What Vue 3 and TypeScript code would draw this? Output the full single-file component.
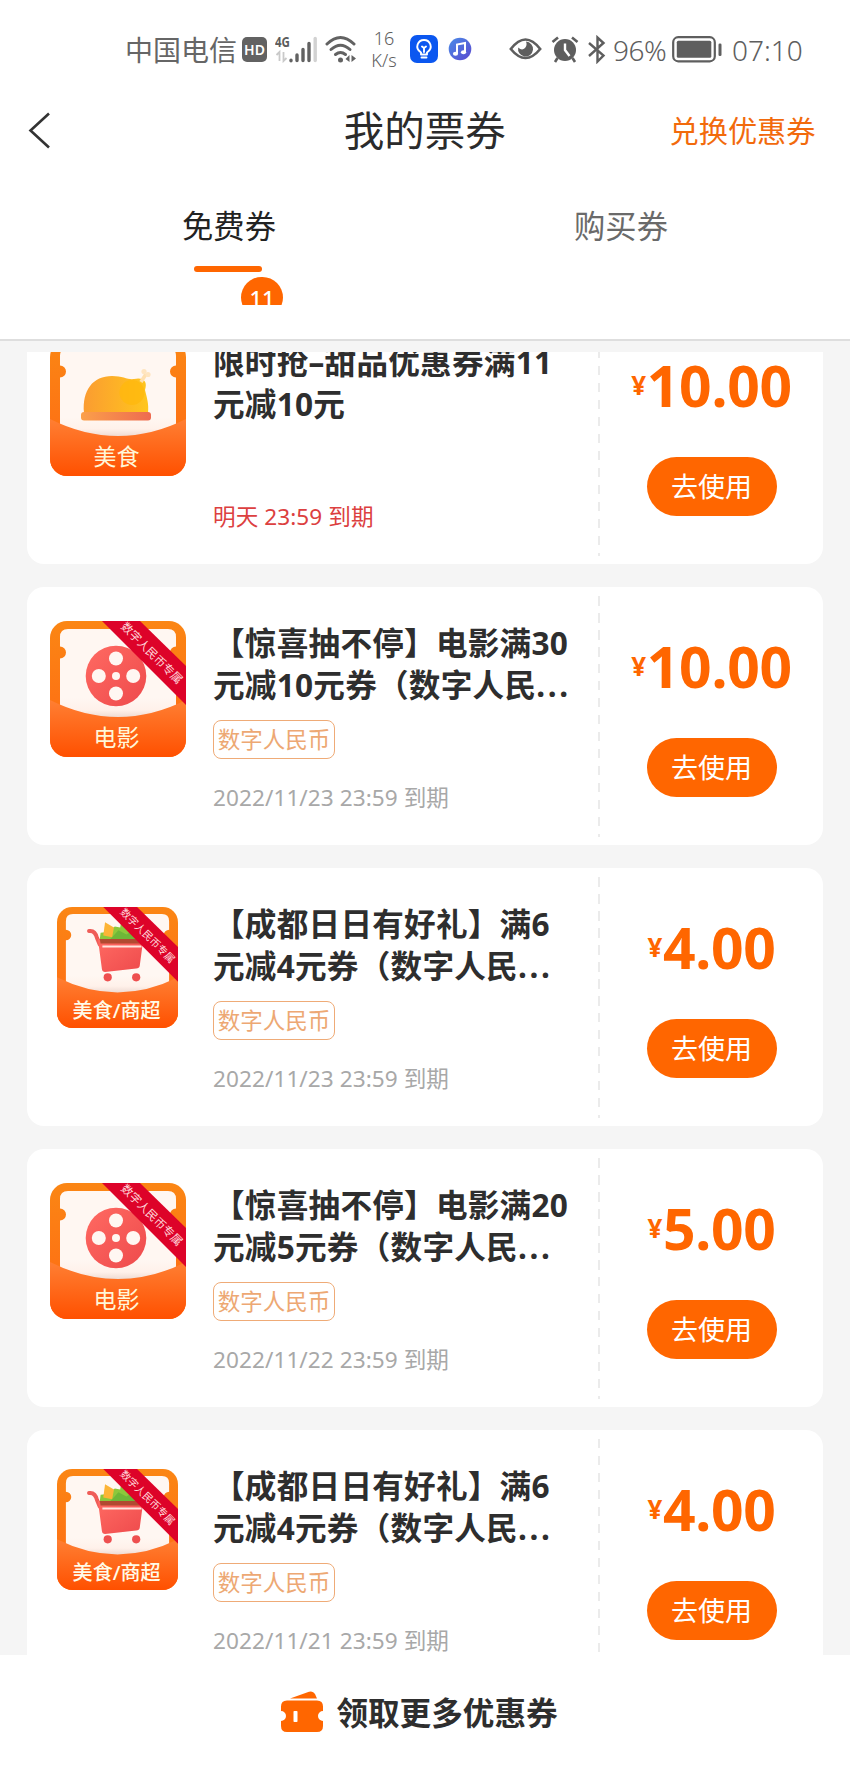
<script setup lang="ts">
type Kind = 'food' | 'movie' | 'market'

interface Coupon {
  kind: Kind
  label: string
  lines: string[]
  cut: boolean
  tag?: string
  expiry: string
  urgent?: boolean
  amount: string
}

const coupons: Coupon[] = [
  { kind: 'food', label: '美食', lines: ['限时抢–甜品优惠券满11', '元减10元'], cut: false, expiry: '明天 23:59 到期', urgent: true, amount: '10.00' },
  { kind: 'movie', label: '电影', lines: ['【惊喜抽不停】电影满30', '元减10元券（数字人民'], cut: true, tag: '数字人民币', expiry: '2022/11/23 23:59 到期', amount: '10.00' },
  { kind: 'market', label: '美食/商超', lines: ['【成都日日有好礼】满6', '元减4元券（数字人民'], cut: true, tag: '数字人民币', expiry: '2022/11/23 23:59 到期', amount: '4.00' },
  { kind: 'movie', label: '电影', lines: ['【惊喜抽不停】电影满20', '元减5元券（数字人民'], cut: true, tag: '数字人民币', expiry: '2022/11/22 23:59 到期', amount: '5.00' },
  { kind: 'market', label: '美食/商超', lines: ['【成都日日有好礼】满6', '元减4元券（数字人民'], cut: true, tag: '数字人民币', expiry: '2022/11/21 23:59 到期', amount: '4.00' },
]
</script>

<template>
  <div class="phone">
    <svg class="defs" width="0" height="0" aria-hidden="true">
      <defs>
        <linearGradient id="frame" x1="0" y1="0" x2="0" y2="1">
          <stop offset="0" stop-color="#fb8614" /><stop offset="0.6" stop-color="#fd7414" />
        </linearGradient>
        <linearGradient id="pocket" x1="0" y1="0" x2="0" y2="1">
          <stop offset="0" stop-color="#ff7f33" /><stop offset="1" stop-color="#ff5000" />
        </linearGradient>
        <linearGradient id="panel" x1="0" y1="0" x2="0" y2="1">
          <stop offset="0.75" stop-color="#fff7f2" /><stop offset="0.88" stop-color="#fff1ea" /><stop offset="1" stop-color="#e6cfc6" />
        </linearGradient>
        <linearGradient id="red" x1="0" y1="0" x2="1" y2="1">
          <stop offset="0" stop-color="#ff6a62" /><stop offset="1" stop-color="#ee4a4c" />
        </linearGradient>
        <linearGradient id="roast" x1="0" y1="0" x2="1" y2="0">
          <stop offset="0" stop-color="#fb9c31" /><stop offset="1" stop-color="#ffc61d" />
        </linearGradient>
        <linearGradient id="plate" x1="0" y1="0" x2="1" y2="0">
          <stop offset="0" stop-color="#fba04a" /><stop offset="1" stop-color="#ee6b50" />
        </linearGradient>
        <linearGradient id="note" x1="0" y1="0" x2="1" y2="1">
          <stop offset="0" stop-color="#4b8ce8" /><stop offset="1" stop-color="#5a48cf" />
        </linearGradient>
        <clipPath id="tile"><rect width="136" height="136" rx="17" /></clipPath>
      </defs>
    </svg>

    <header class="top">
      <div class="status">
        <span class="carrier">中国电信</span>
        <span class="hd">HD</span>
        <svg class="signal" width="44" height="28" viewBox="0 0 44 28">
          <text x="0" y="12" font-size="14" font-weight="700" textLength="15" lengthAdjust="spacingAndGlyphs" fill="#5c5c5c">4G</text>
          <path d="M4.500 26V17L1.500 20M8.500 17V26L11.500 23" stroke="#c9c9c9" stroke-width="1.800" fill="none" />
          <g stroke-width="3.400" stroke-linecap="round" stroke="#626262">
            <path d="M16 25.300V25.700M22 20V25.500M28 14.500V25.500M34 8.500V25.500" />
            <path d="M40.200 3.500V25.500" stroke="#d2d2d2" />
          </g>
        </svg>
        <svg class="wifi" width="32" height="28" viewBox="0 0 32 28">
          <g fill="none" stroke="#626262" stroke-width="3" stroke-linecap="round">
            <path d="M2 9Q15.500 -4 29 9" /><path d="M6 14.500Q15.500 6 25 14.500" /><path d="M10.500 19.500Q15.500 15.500 20.500 19.500" />
          </g>
          <circle cx="15.500" cy="25" r="2.500" fill="#626262" />
          <path d="M24.500 20V27L20.500 24ZM26.500 20V27L31 23.500Z" fill="#626262" />
        </svg>
        <span class="speed"><span>16</span><span>K/s</span></span>
        <svg class="bulb" width="28" height="28" viewBox="0 0 28 28">
          <rect width="28" height="28" rx="7" fill="#0b57f0" />
          <g fill="none" stroke="#fff" stroke-width="1.900" stroke-linecap="round" stroke-linejoin="round">
            <path d="M11 19.500V17.500C4 13 8 5 14 5S24 13 17 17.500V19.500ZM11.500 22.500H16.500M14 17V13L12 11.500M14 13L16 11.500" />
          </g>
        </svg>
        <svg class="music" width="24" height="24" viewBox="0 0 24 24">
          <circle cx="12" cy="12" r="11.300" fill="url(#note)" />
          <path d="M9 16.500V7.500L17 6V15" fill="none" stroke="#fff" stroke-width="2" />
          <ellipse cx="7.500" cy="16.800" rx="2.600" ry="2" fill="#fff" /><ellipse cx="15.500" cy="15.300" rx="2.600" ry="2" fill="#fff" />
        </svg>
        <svg class="eye" width="33" height="24" viewBox="0 0 33 24">
          <path d="M1.800 12Q16.500 -7 31.200 12Q16.500 30 1.800 12Z" fill="none" stroke="#5e5e5e" stroke-width="2.600" />
          <path d="M17 4.500A7.500 7.500 0 1 1 9.200 10.500Q13 14 16 11Q18.500 8 17 4.500Z" fill="#5e5e5e" />
        </svg>
        <svg class="alarm" width="28" height="27" viewBox="0 0 28 27">
          <circle cx="14" cy="14" r="11" fill="#5e5e5e" />
          <path d="M1.500 6L7 1.500M26.500 6L21 1.500M6.500 22L4 26M21.500 22L24 26" stroke="#5e5e5e" stroke-width="2.600" />
          <path d="M14 7.500V14L18.500 20" stroke="#fff" stroke-width="2.400" fill="none" />
        </svg>
        <svg class="bt" width="18" height="29" viewBox="0 0 18 29">
          <path d="M1 8L15.500 20.500L9.500 26.500V2.500L15.500 8L1 21" fill="none" stroke="#5e5e5e" stroke-width="2.400" />
        </svg>
        <span class="percent">96%</span>
        <svg class="battery" width="51" height="27" viewBox="0 0 51 27">
          <rect x="1.200" y="1.200" width="41.600" height="24.100" rx="5" fill="none" stroke="#5e5e5e" stroke-width="2.200" />
          <rect x="4.800" y="4.800" width="34.500" height="17" rx="1.500" fill="#5e5e5e" />
          <rect x="46.500" y="7.500" width="3" height="12.500" rx="1.300" fill="#5e5e5e" />
        </svg>
        <span class="clock">07:10</span>
      </div>

      <nav class="nav">
        <svg class="back" width="24" height="38" viewBox="0 0 24 38"><path d="M21 1.500L2.500 18.500L21 35.500" fill="none" stroke="#333" stroke-width="2.600" /></svg>
        <h1>我的票券</h1>
        <a class="redeem">兑换优惠券</a>
      </nav>

      <div class="tabs">
        <div class="tab active">
          <span class="name">免费券</span>
          <i class="bar"></i>
          <span class="badge-clip"><b class="badge">11</b></span>
        </div>
        <div class="tab"><span class="name">购买券</span></div>
      </div>
    </header>

    <main class="list">
      <article v-for="(c, i) in coupons" :key="i" class="card">
        <div class="thumb" :class="c.kind">
          <svg viewBox="0 0 136 136">
            <g clip-path="url(#tile)">
              <rect width="136" height="136" fill="url(#frame)" />
              <path d="M18 8H118Q126 8 126 16V25.500A6 6 0 0 0 126 37.500V100H10V37.500A6 6 0 0 0 10 25.500V16Q10 8 18 8Z" fill="url(#panel)" />
              <g v-if="c.kind === 'food'">
                <path d="M34 73C32 50 43 36 62 36C73 36 78 40 84 39C93 37 98 41 95 50C97 58 99 64 98 73Z" fill="url(#roast)" />
                <circle cx="82" cy="52.500" r="12.500" fill="#ffb80c" opacity="0.750" />
                <path d="M91 42L96 34" stroke="#ffe0b0" stroke-width="3.500" />
                <circle cx="94" cy="31.500" r="2.600" fill="#ffe5c0" /><circle cx="98" cy="34.500" r="2.600" fill="#ffe5c0" />
                <rect x="31" y="72" width="70" height="8.500" rx="3" fill="url(#plate)" />
              </g>
              <g v-else-if="c.kind === 'movie'">
                <circle cx="66" cy="55" r="30.300" fill="url(#red)" />
                <g fill="#fff7f2">
                  <circle cx="66" cy="55" r="4" /><circle cx="66" cy="37.500" r="7" /><circle cx="66" cy="72.500" r="7" />
                  <circle cx="48.800" cy="55" r="7" /><circle cx="83.200" cy="55" r="7" />
                </g>
              </g>
              <g v-else>
                <path d="M48 37L49 29L57 28L65 22L71 23L72 17L79 21L90 30V39Z" fill="#8cc83c" />
                <path d="M52 32L54 17L64 23L62 34Z" fill="#fdb436" />
                <path d="M62 34L69 26L78 31L86 26L92 32V40H56Z" fill="#55a934" opacity="0.550" />
                <path d="M36 27Q43 26 45 35L48 42" fill="none" stroke="#ef5d58" stroke-width="4.500" stroke-linecap="round" />
                <path d="M46 36H97L93 66Q92.500 69 89 69L54 73Q51 73 50.500 70Z" fill="url(#red)" />
                <path d="M48 36H97L96 41H49Z" fill="#b14a31" />
                <path d="M51 44.500H95" stroke="#ffe5df" stroke-width="2.200" />
                <circle cx="57" cy="79" r="4.600" fill="#ee4f4f" /><circle cx="89" cy="79" r="4.600" fill="#ee4f4f" />
              </g>
              <path d="M0 79Q68 113 136 79V136H0Z" fill="url(#pocket)" />
              <text v-if="c.kind === 'market'" x="67" y="124.500" text-anchor="middle" font-size="23" font-weight="500" textLength="99" lengthAdjust="spacingAndGlyphs" fill="#fffbe8">{{ c.label }}</text>
              <text v-else x="66.500" y="124.500" text-anchor="middle" font-size="23" fill="#fff6d8">{{ c.label }}</text>
              <g v-if="c.kind !== 'food'">
                <path d="M52 0H90L136 45V84Z" fill="#dd0329" />
                <text transform="translate(102 32) rotate(45)" text-anchor="middle" y="4.300" font-size="11.600" fill="#ffd9dc">数字人民币专属</text>
              </g>
            </g>
          </svg>
        </div>
        <div class="info">
          <h2>
            <span class="line">{{ c.lines[0] }}</span>
            <span class="line">{{ c.lines[1] }}<span v-if="c.cut" class="dots">...</span></span>
          </h2>
          <span v-if="c.tag" class="tag">{{ c.tag }}</span>
          <p class="date" :class="{ urgent: c.urgent }">{{ c.expiry }}</p>
        </div>
        <i class="divider"></i>
        <div class="side">
          <div class="price"><span class="yen">¥</span>{{ c.amount }}</div>
          <button class="use">去使用</button>
        </div>
      </article>
    </main>

    <footer class="more">
      <svg width="44" height="42" viewBox="0 0 44 42">
        <path d="M10 7.500L29 0.800Q33 -0.500 35 3L37 7.500Z" fill="#ff6600" />
        <path d="M7 9.500H37Q43 9.500 43 15.500V20A5 5 0 0 0 43 30V35Q43 41 37 41H7Q1 41 1 35V30A5 5 0 0 0 1 20V15.500Q1 9.500 7 9.500Z" fill="#ff6600" />
        <rect x="13.500" y="20" width="4" height="11" rx="0.800" fill="#fff" />
      </svg>
      <span>领取更多优惠券</span>
    </footer>
  </div>
</template>

<style>
html, body { margin: 0; background: #fff; }
</style>

<style scoped>
.phone { width: 850px; height: 1768px; display: flex; flex-direction: column; overflow: hidden; background: #f5f5f5; font-family: "Noto Sans", "Noto Sans CJK SC", sans-serif; color: #2e2e2e; }
.defs { position: absolute; }
.top { flex: none; height: 339px; background: #fff; border-bottom: 2px solid #dedede; box-sizing: content-box; }
.status { height: 98px; display: flex; align-items: center; padding-left: 125px; color: #5e5e5e; white-space: nowrap; }
.status > * { flex: none; }
.carrier { width: 111px; font-size: 28px; font-weight: 400; line-height: 30px; color: #666; padding-top: 1px; }
.hd { width: 25px; height: 25px; margin-left: 6px; border-radius: 5px; background: #626262; color: #fff; font-size: 14px; line-height: 25px; font-weight: 600; text-align: center; }
.signal { margin-left: 8px; }
.wifi { margin-left: 6px; }
.speed { width: 34px; margin-left: 10px; display: flex; flex-direction: column; align-items: center; font-size: 18px; font-weight: 300; line-height: 22px; }
.bulb { margin-left: 9px; }
.music { margin-left: 10px; }
.eye { margin-left: 37px; }
.alarm { margin-left: 9px; }
.bt { margin-left: 9px; }
.percent { width: 54px; margin-left: 7px; font-size: 28px; font-weight: 300; letter-spacing: -0.5px; line-height: 30px; padding-top: 1px; }
.battery { margin-left: 5px; }
.clock { margin-left: 9px; font-size: 28px; font-weight: 300; line-height: 30px; padding-top: 1px; }

.nav { height: 66px; display: grid; grid-template-columns: 1fr auto 1fr; align-items: center; padding: 0 34.500px 0 28px; }
.nav h1 { margin: 0 -3px 0 3px; font-size: 40.500px; font-weight: 400; line-height: 60px; color: #2b2b2b; }
.redeem { justify-self: end; font-size: 29.200px; color: #f26a0c; line-height: 44px; margin-top: -1px; }

.tabs { display: flex; padding: 0 33px; }
.tab { position: relative; width: 392px; padding-top: 40px; display: flex; flex-direction: column; align-items: center; font-size: 31.300px; color: #6a6a6a; }
.tab.active { color: #222; }
.name { line-height: 44px; }
.bar { width: 68px; height: 6px; margin: 18px 3px 0 0; border-radius: 3px; background: #ff6600; }
.badge-clip { position: absolute; left: 208px; top: 113px; width: 42px; height: 27.500px; overflow: hidden; }
.badge { display: block; height: 41px; border-radius: 21px; background: #ff6600; color: #fff; font-size: 22px; font-weight: 500; line-height: 42px; text-align: center; }

.list { flex: 1; min-height: 0; margin-top: 11px; padding: 0 27px; overflow: hidden; }
.card { height: 258px; display: flex; margin-bottom: 23px; border-radius: 17px; background: #fff; }
.card:first-child { margin-top: -46px; }
.thumb { flex: none; width: 136px; height: 136px; margin: 34px 0 0 22.500px; }
.thumb svg { display: block; width: 100%; height: 100%; }
.thumb.market { width: 121px; height: 121px; margin: 39px 7.500px 0 30px; }
.info { width: 358px; margin-left: 27.500px; padding: 35px 0 32px; box-sizing: border-box; display: flex; flex-direction: column; align-items: flex-start; margin-right: 27px; }
h2 { margin: 0; font-size: 31.600px; font-weight: 700; line-height: 42px; letter-spacing: 0.250px; white-space: nowrap; }
.line { display: block; height: 42px; }
.dots { letter-spacing: 2.600px; }
.tag { height: 39px; width: 122px; margin-top: 14px; box-sizing: border-box; border: 1.500px solid #efab77; border-radius: 8px; color: #eda873; font-size: 22.500px; line-height: 38px; text-align: center; white-space: nowrap; }
.date { margin: auto 0 0; font-size: 22.600px; letter-spacing: 0.060px; line-height: 30px; color: #a8a8a8; white-space: nowrap; }
.date.urgent { color: #dc4040; }
.divider { flex: none; width: 2px; margin: 9px 0 8px; background: repeating-linear-gradient(#ebebeb 0 9.500px, transparent 9.500px 17px); }
.side { flex: 1; display: flex; flex-direction: column; align-items: center; }
.price { height: 78px; margin-top: 40px; line-height: 78px; color: #ff6600; font-size: 57px; font-weight: 700; letter-spacing: -0.300px; white-space: nowrap; }
.yen { font-size: 26px; position: relative; top: -12px; margin-right: 1px; }
.use { width: 130px; height: 59px; margin-top: 32.500px; padding: 0; border: 0; border-radius: 30px; background: #ff6600; color: #fff; font: inherit; font-size: 27px; line-height: 59px; }

.more { flex: none; height: 113px; display: flex; align-items: center; justify-content: center; gap: 12px; padding-right: 12px; box-sizing: border-box; background: #fff; font-size: 31.600px; font-weight: 700; }
.more span { margin-top: -1px; }
</style>
